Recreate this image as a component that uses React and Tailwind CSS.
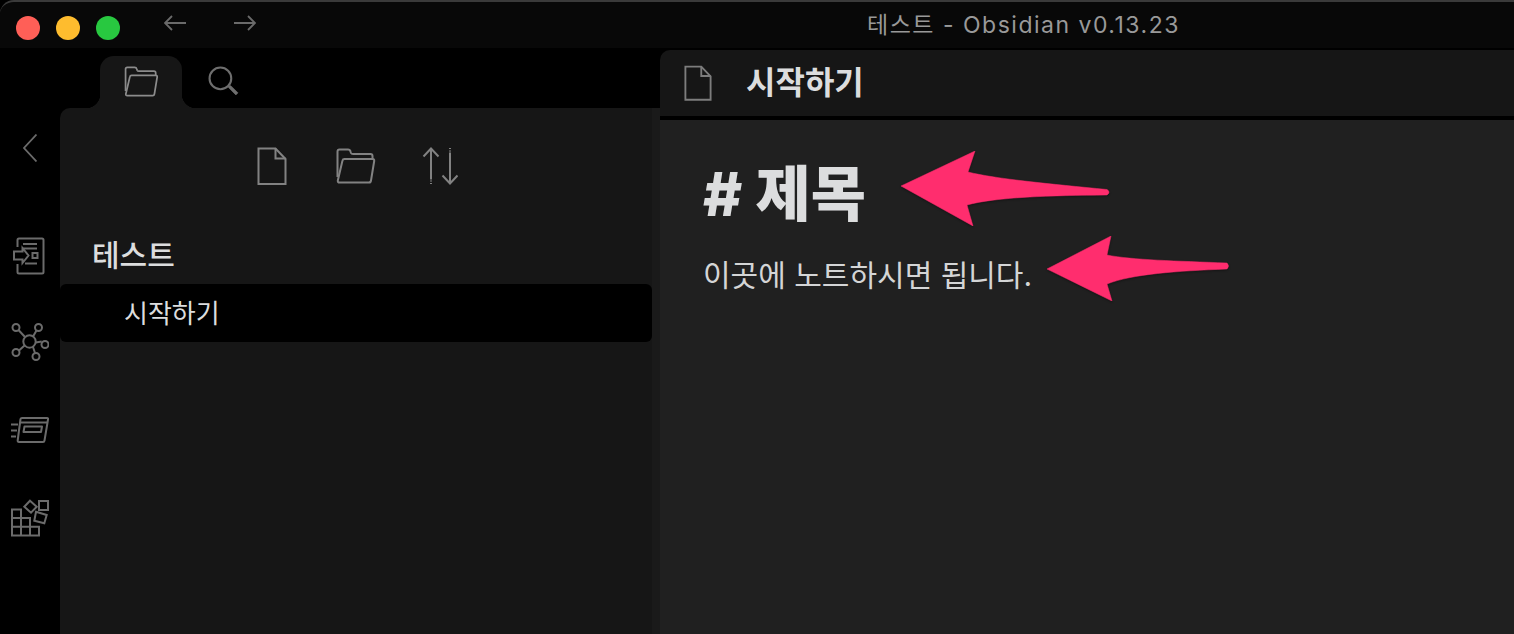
import React from "react";

const FONT = '"Inter", "Noto Sans CJK KR", sans-serif';

function FileIcon({ className }) {
  return (
    <svg viewBox="0 0 30 38" fill="none" stroke="currentColor" strokeWidth="2" className={className}>
      <path d="M1.500 1.500h17l10 10.500v25h-27z" />
      <path d="M18.500 1.500v10h10" />
    </svg>
  );
}

function FolderIcon({ className }) {
  return (
    <svg viewBox="0 0 40 36" fill="none" stroke="currentColor" strokeWidth="2" strokeLinejoin="round" className={className}>
      <path d="M1.500 29V3.500q0-2 2-2h8.500q2 0 2.500 2l.5 1.500q.4 1 2 1h17.500q2 0 2 2v3" />
      <path d="M6.500 12.500q.3-1.500 2-1.500h28q2 0 1.700 2l-3.200 19.500q-.3 2-2 2H3.500q-2 0-1.700-2z" />
    </svg>
  );
}

function SortIcon({ className }) {
  return (
    <svg viewBox="0 0 36 38" fill="none" stroke="currentColor" strokeWidth="2" className={className}>
      <path d="M1.500 9.500 9 1.500l7.500 8M9 1.500v31" />
      <path d="M9 33.500v1M9 36v1" />
      <path d="M20.500 28.500 28 36.500l7.500-8M28 36.500v-31" />
      <path d="M28 1v1M28 3.500v1" />
    </svg>
  );
}

function SearchIcon({ className }) {
  return (
    <svg viewBox="0 0 30 30" fill="none" stroke="currentColor" className={className}>
      <circle cx="12" cy="12" r="10.500" strokeWidth="2" />
      <path d="M19.500 19.500 22 19l7 7-2 2-7-7z" fill="currentColor" strokeWidth="0.600" />
    </svg>
  );
}

function StartIcon({ className }) {
  return (
    <svg viewBox="0 0 32 38" fill="none" stroke="currentColor" strokeWidth="2" className={className}>
      <path d="M4.500 10V3q0-1.500 1.500-1.500h23q1.500 0 1.500 1.500v32q0 1.500-1.500 1.500H6q-1.500 0-1.500-1.500v-8" />
      <path d="M10 7h14M10 11.500h14M19.500 16h5v5h-5zM12 26.500h12" />
      <path d="M1 14.500h8.500V11l6 7.500-6 7.500v-3.500H1z" />
    </svg>
  );
}

function GraphIcon({ className }) {
  return (
    <svg viewBox="0 0 38 38" fill="none" stroke="currentColor" strokeWidth="2" className={className}>
      <circle cx="18.500" cy="18.500" r="6.200" />
      <circle cx="5" cy="4.500" r="3.500" />
      <circle cx="27.500" cy="4.500" r="3.500" />
      <circle cx="34" cy="21.500" r="3.500" />
      <circle cx="5" cy="29.500" r="3.500" />
      <circle cx="25" cy="33.500" r="3.500" />
      <path d="M7.500 7l6.500 7M25.500 7.500 22 13.500M24.700 19.500l6-1M8 27.500l5.500-5M22 24l2 6" />
    </svg>
  );
}

function SlidesIcon({ className }) {
  return (
    <svg viewBox="0 0 38 26" fill="none" stroke="currentColor" strokeWidth="2" strokeLinejoin="round" className={className}>
      <path d="M9.500 2q.3-1 1.500-1h25q1.300 0 1 1.500l-3.500 21q-.2 1.500-1.500 1.500H8q-1.500 0-1.300-1.500z" />
      <path d="M9 5.500h28" />
      <path d="M13.500 9.500H31l-1 5.500H12.500z" />
      <path d="M0 7.500h7M0 13.500h6M0 19.500h5" />
    </svg>
  );
}

function PluginIcon({ className }) {
  return (
    <svg viewBox="0 0 38 38" fill="none" stroke="currentColor" strokeWidth="2" className={className}>
      <path d="M1 10.500h9v26H1zM1 19h18v17.500M1 27.700h27v8.800H10" />
      <path d="M19 1.700 25.700 7.700 20 13.700 13.300 7.700z" />
      <path d="M28 2h9v9h-9z" />
      <path d="M25 12.700 35.700 16 33.300 24.300 23.300 21.700z" />
    </svg>
  );
}

// Annotation arrow pointing left, with a tapered tail
function Arrow({ d, width, height, className }) {
  return (
    <svg viewBox={`0 0 ${width} ${height}`} className={className}>
      <path d={d} fill="#ff2d6e" stroke="#ff2d6e" strokeLinejoin="round" strokeWidth="0.500" />
    </svg>
  );
}

export default function App() {
  return (
    <div className="flex h-[634px] w-[1514px] flex-col overflow-hidden bg-black" style={{ fontFamily: FONT }}>
      {/* Title bar */}
      <div className="relative flex h-12 shrink-0 items-center overflow-hidden rounded-tl-[14px] border-t-2 border-[#3a3a3a] bg-[#080808] pt-1.5 pl-4">
        <div className="flex gap-4">
          <span className="h-6 w-6 rounded-full bg-[#ff5f57]" />
          <span className="h-6 w-6 rounded-full bg-[#febc2e]" />
          <span className="h-6 w-6 rounded-full bg-[#28c840]" />
        </div>
        <svg viewBox="0 0 92 16" fill="none" stroke="#6a6a6a" strokeWidth="1.800" className="mb-[10px] ml-[44px] h-4 w-[92px]">
          <path d="M22 8H1M8 1 1 8l7 7" />
          <path d="M70 8h21M84 1l7 7-7 7" />
        </svg>
        <span className="absolute top-[9px] left-[867px] text-[23px] leading-7 tracking-[1.5px] text-[#999999]">
          테스트 - Obsidian v0.13.23
        </span>
      </div>

      <div className="flex min-h-0 flex-1">
        {/* Ribbon */}
        <div className="flex w-[60px] shrink-0 flex-col items-center bg-black pt-[86px] text-[#6b6b6b]">
          <svg viewBox="0 0 14 28" fill="none" stroke="currentColor" strokeWidth="1.800" className="h-7 w-3.5">
            <path d="M13.500 .5 1 14l12.500 13.500" />
          </svg>
          <StartIcon className="mt-[75px] mr-[3px] h-[38px] w-8" />
          <GraphIcon className="mt-12 h-[38px] w-[38px]" />
          <SlidesIcon className="mt-14 h-[26px] w-[38px]" />
          <PluginIcon className="mt-14 h-[38px] w-[38px]" />
        </div>

        {/* Sidebar */}
        <div className="flex w-[600px] shrink-0 flex-col">
          <div className="flex h-[60px] shrink-0 items-stretch bg-black pl-10">
            <div className="relative mt-2 flex w-[82px] items-start justify-center rounded-t-[14px] bg-[#161616] pt-2.5 text-[#8c8c8c]">
              <span className="absolute bottom-0 -left-[14px] h-3.5 w-3.5 bg-[radial-gradient(circle_at_0_0,transparent_14px,#161616_14.5px)]" />
              <span className="absolute -right-[14px] bottom-0 h-3.5 w-3.5 bg-[radial-gradient(circle_at_100%_0,transparent_14px,#161616_14.5px)]" />
              <FolderIcon className="h-[31px] w-[35px]" />
            </div>
            <div className="ml-[26px] pt-[18px] text-[#6e6e6e]">
              <SearchIcon className="h-[31px] w-[31px]" />
            </div>
          </div>
          <div className="flex flex-1 flex-col rounded-tl-[10px] border-r-8 border-[#1a1a1a] bg-[#161616]">
            <div className="flex h-[120px] shrink-0 items-center justify-center gap-[49px] pr-1.5 pb-1 pl-2 text-[#828282]">
              <FileIcon className="h-[38px] w-[30px]" />
              <FolderIcon className="h-9 w-10" />
              <SortIcon className="ml-[-3px] h-[38px] w-9" />
            </div>
            <div className="flex h-[56px] shrink-0 items-start pt-[7px] pl-8 text-[30px] leading-10 font-medium text-[#dcddde]">
              테스트
            </div>
            <div className="flex h-[58px] shrink-0 items-center rounded-md bg-black pt-0.5 pl-16 text-[26px] leading-9 text-[#dcddde]">
              시작하기
            </div>
          </div>
        </div>

        {/* Editor pane */}
        <div className="flex min-w-0 flex-1 flex-col bg-black pt-0.5">
          <div className="flex h-[66px] shrink-0 items-center rounded-tl-[10px] bg-[#161616] pl-6">
            <FileIcon className="h-[36px] w-[28px] text-[#7d7d7d]" />
            <span className="ml-[34px] text-[32px] leading-10 font-semibold text-[#dcddde]">시작하기</span>
          </div>
          <div className="h-1 shrink-0 bg-black" />
          <div className="relative flex-1 bg-[#202020] px-[43px]">
            <div className="mt-[32px] text-[60px] leading-[84px] font-extrabold text-[#dcddde]"># 제목</div>
            <div className="mt-[21px] text-[30px] leading-9 text-[#d4d5d6]">이곳에 노트하시면 됩니다.</div>
            <Arrow
              width={210}
              height={75}
              d="M0 35 74 0 67 21C95 28 150 33 206 38.500Q210 41 206 44C150 44.500 95 46 66 54L72 75Z"
              className="absolute top-[31px] left-[241px] h-[75px] w-[210px] drop-shadow-[0_1px_1px_rgba(0,0,0,0.4)]"
            />
            <Arrow
              width={183}
              height={65}
              d="M0 33 64 0 60 19C85 24 130 25 180 27Q183 30 180 33C130 35 85 38 60 48L65 65Z"
              className="absolute top-[116px] left-[387px] h-[65px] w-[183px] drop-shadow-[0_1px_1px_rgba(0,0,0,0.4)]"
            />
          </div>
        </div>
      </div>
    </div>
  );
}
